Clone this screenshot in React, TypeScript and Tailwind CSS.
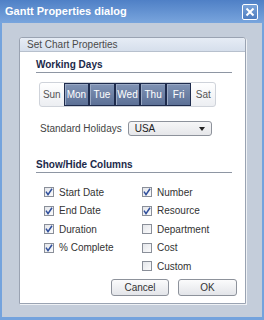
import React, { useState } from 'react';

const days = ['Sun', 'Mon', 'Tue', 'Wed', 'Thu', 'Fri', 'Sat'];

const columns = [
    ['Start Date', true, 'Number', true],
    ['End Date', true, 'Resource', true],
    ['Duration', true, 'Department', false],
    ['% Complete', true, 'Cost', false],
    [null, false, 'Custom', false],
] as const;

function CheckItem({ label, checked }: { label: string; checked: boolean }) {
    const [on, setOn] = useState(checked);
    return (
        <label className="flex items-center h-[18.5px] gap-[5px] text-[10px] text-[#333] cursor-pointer" onClick={() => setOn(!on)}>
            <span className="w-[10px] h-[10px] border border-[#8a8f99] bg-gradient-to-br from-[#e4e6ea] to-[#fbfbfc] flex items-center justify-center">
                {on && (
                    <svg width="8" height="8" viewBox="0 0 8 8">
                        <path d="M1 3.6 L3 6.6 L7 0.8" fill="none" stroke="#2f4f9c" strokeWidth="1.5" />
                    </svg>
                )}
            </span>
            <span>{label}</span>
        </label>
    );
}

export default function App() {
    const [selected, setSelected] = useState(['Mon', 'Tue', 'Wed', 'Thu', 'Fri']);

    const toggleDay = (d: string) => {
        setSelected(s => (s.includes(d) ? s.filter(x => x !== d) : [...s, d]));
    };

    return (
        <div
            className="w-[264px] h-[320px] flex flex-col border-l-2 border-r-2 border-b-[3px] border-[#74a3dd] bg-[#c4cdda]"
            style={{ fontFamily: '"Liberation Sans", Arial, sans-serif' }}
        >
            {/* title bar */}
            <div className="h-[23px] -mx-[2px] px-[5px] flex items-center justify-between bg-gradient-to-b from-[#4f80c6] to-[#79a5dd]">
                <span className="text-white font-bold text-[11px]">Gantt Properties dialog</span>
                <button className="w-[16px] h-[16px] mt-[1px] mr-[1px] border border-white rounded-[2px] bg-gradient-to-b from-[#7aa3d8] to-[#4e7dc0] flex items-center justify-center">
                    <svg width="10" height="10" viewBox="0 0 10 10">
                        <path d="M1.5 1.5 L8.5 8.5 M8.5 1.5 L1.5 8.5" stroke="white" strokeWidth="2" />
                    </svg>
                </button>
            </div>

            {/* body */}
            <div className="flex-1 pt-[14px] pl-[17px] pr-[16px] pb-[13px]">
                <div className="h-full flex flex-col border border-[#9aa3b2] rounded-t-[3px] bg-white shadow-[1px_1px_0_#eef1f5]">
                    <div className="h-[14px] px-[7px] flex items-center text-[10px] text-[#4a4a4a] bg-gradient-to-b from-[#e6ecf5] to-[#d6dfec] border-b border-[#b7c0cd] rounded-t-[3px]">
                        Set Chart Properties
                    </div>

                    <div className="pl-[16px] pr-[13px] pt-[7px] flex flex-col">
                        <div className="text-[10px] font-bold text-[#1c2a4a] leading-[12px] pb-[1px] border-b border-[#8e96a3]">
                            Working Days
                        </div>

                        <div className="mt-[9px] ml-[3px] flex w-[177px] h-[25px] border border-[#cfd3da] rounded-[3px] bg-gradient-to-b from-[#ffffff] to-[#eceef2]">
                            {days.map(d => {
                                const on = selected.includes(d);
                                return (
                                    <button
                                        key={d}
                                        onClick={() => toggleDay(d)}
                                        className={
                                            on
                                                ? 'flex-1 text-[10px] text-white border border-[#1e2b4c] shadow-[inset_1px_1px_0_#9aa9c4] bg-gradient-to-b from-[#8093b4] to-[#5c7096]'
                                                : 'flex-1 text-[10px] text-[#555]'
                                        }
                                    >
                                        {d}
                                    </button>
                                );
                            })}
                        </div>

                        <div className="mt-[14px] ml-[4px] flex items-center gap-[6px]">
                            <span className="text-[10px] text-[#444]">Standard Holidays</span>
                            <div className="w-[84px] h-[15px] px-[6px] flex items-center justify-between border border-[#8d929b] rounded-[3px] bg-gradient-to-b from-[#f6f6f7] to-[#e6e7ea] text-[10px] text-[#222]">
                                <span>USA</span>
                                <svg width="6" height="4" viewBox="0 0 6 4">
                                    <path d="M0 0 H6 L3 4 Z" fill="#222" />
                                </svg>
                            </div>
                        </div>

                        <div className="mt-[23px] text-[10px] font-bold text-[#1c2a4a] leading-[12px] pb-[1px] border-b border-[#8e96a3]">
                            Show/Hide Columns
                        </div>

                        <div className="mt-[10px] ml-[8px] grid grid-cols-[98px_1fr]">
                            {columns.map(([l1, c1, l2, c2], i) => (
                                <React.Fragment key={i}>
                                    {l1 ? <CheckItem label={l1} checked={c1} /> : <div />}
                                    <CheckItem label={l2} checked={c2} />
                                </React.Fragment>
                            ))}
                        </div>
                    </div>

                    <div className="mt-auto mb-[7px] pr-[8px] flex justify-end gap-[9px]">
                        <button className="w-[58px] h-[17px] border border-[#8d929b] rounded-[3px] bg-gradient-to-b from-[#fbfbfc] to-[#e3e5e9] text-[10px] text-[#333]">
                            Cancel
                        </button>
                        <button className="w-[59px] h-[17px] border border-[#8d929b] rounded-[3px] bg-gradient-to-b from-[#fbfbfc] to-[#e3e5e9] text-[10px] text-[#333]">
                            OK
                        </button>
                    </div>
                </div>
            </div>
        </div>
    );
}
